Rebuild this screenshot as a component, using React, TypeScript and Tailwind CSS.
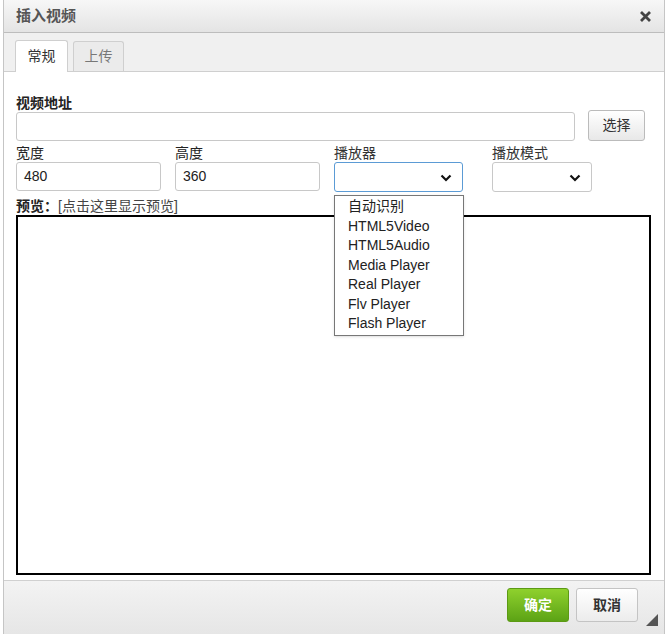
import React from 'react';

const font = { fontFamily: '"Liberation Sans", "Noto Sans CJK SC", sans-serif' };

function Chevron() {
  return (
    <svg width="12" height="8" viewBox="0 0 12 8" className="absolute right-[10px] top-[11px]">
      <path d="M1.5 1.5 L6 6 L10.5 1.5" stroke="#111" strokeWidth="2.2" fill="none" />
    </svg>
  );
}

export default function App() {
  const players = ['自动识别', 'HTML5Video', 'HTML5Audio', 'Media Player', 'Real Player', 'Flv Player', 'Flash Player'];
  return (
    <div className="h-[634px] w-[666px] bg-white text-[14px] text-[#222]" style={font}>
      <div className="relative ml-[3px] flex h-[634px] w-[662px] flex-col border-x border-[#c5c5c5] bg-white">
        {/* title */}
        <div className="flex h-[33px] items-center justify-between border-b border-[#bdbdbd] bg-gradient-to-b from-[#f7f7f7] to-[#e4e4e4] pl-[12px] pr-[12px]">
          <span className="text-[15px] font-bold text-[#555]">插入视频</span>
          <svg width="13" height="13" viewBox="0 0 13 13">
            <path d="M2 2 L11 11 M11 2 L2 11" stroke="#444" strokeWidth="2.8" />
          </svg>
        </div>
        {/* tabs */}
        <div className="flex h-[39px] items-end gap-[5px] border-b border-[#cfcfcf] bg-[#f0f0f0] pl-[11px]">
          <div className="-mb-px flex h-[32px] w-[53px] items-center justify-center rounded-t-[3px] border border-b-0 border-[#cfcfcf] bg-white text-[#333]">常规</div>
          <div className="mb-0 flex h-[30px] w-[51px] items-center justify-center rounded-t-[3px] border border-b-0 border-[#cfcfcf] bg-[#ebebeb] text-[#777]">上传</div>
        </div>
        {/* body */}
        <div className="relative flex-1 px-[12px] pt-[22px]">
          <div className="font-bold leading-[18px]">视频地址</div>
          <div className="flex items-center gap-[13px]">
            <div className="h-[29px] w-[559px] rounded-[3px] border border-[#c8c8c8]" />
            <div className="-mt-[2px] flex h-[31px] w-[57px] items-center justify-center rounded-[3px] border border-[#bbb] bg-gradient-to-b from-white to-[#e8e8e8] text-[#333]">选择</div>
          </div>
          <div className="mt-[3px] flex">
            <div className="w-[159px]">
              <div className="leading-[18px]">宽度</div>
              <div className="flex h-[29px] w-[145px] items-center rounded-[3px] border border-[#c8c8c8] pl-[7px]">480</div>
            </div>
            <div className="w-[159px]">
              <div className="leading-[18px]">高度</div>
              <div className="flex h-[29px] w-[145px] items-center rounded-[3px] border border-[#c8c8c8] pl-[7px]">360</div>
            </div>
            <div className="w-[158px]">
              <div className="leading-[18px] text-[#333]">播放器</div>
              <div className="relative h-[30px] w-[129px] rounded-[3px] border border-[#5b9bd5]"><Chevron /></div>
            </div>
            <div>
              <div className="leading-[18px] text-[#333]">播放模式</div>
              <div className="relative h-[30px] w-[100px] rounded-[3px] border border-[#c8c8c8]"><Chevron /></div>
            </div>
          </div>
          <div className="mt-[5px] leading-[18px]">
            <span className="font-bold">预览：</span>
            <span className="text-[#444]">[点击这里显示预览]</span>
          </div>
          <div className="h-[360px] w-[635px] border-2 border-black" />
          {/* dropdown */}
          <div className="absolute left-[330px] top-[123px] w-[130px] border border-[#777] bg-white py-[1px] shadow-sm">
            {players.map((p) => (
              <div key={p} className="h-[19.5px] pl-[13px] leading-[19.5px] text-[#222]">{p}</div>
            ))}
          </div>
        </div>
        {/* footer */}
        <div className="relative flex h-[54px] items-start justify-end gap-[7px] border-t border-[#d0d0d0] bg-gradient-to-b from-[#f3f3f3] to-[#e6e6e6] pr-[26px] pt-[7px]">
          <div className="flex h-[34px] w-[62px] items-center justify-center rounded-[3px] border border-[#5c9a14] bg-gradient-to-b from-[#8fd12d] to-[#5ca315] font-bold text-white">确定</div>
          <div className="flex h-[34px] w-[62px] items-center justify-center rounded-[3px] border border-[#c4c4c4] bg-gradient-to-b from-white to-[#ececec] font-bold text-[#333]">取消</div>
          <svg width="12" height="12" viewBox="0 0 12 12" className="absolute bottom-[8px] right-[6px]">
            <path d="M12 0 L12 12 L0 12 Z" fill="#555" />
          </svg>
        </div>
      </div>
    </div>
  );
}
